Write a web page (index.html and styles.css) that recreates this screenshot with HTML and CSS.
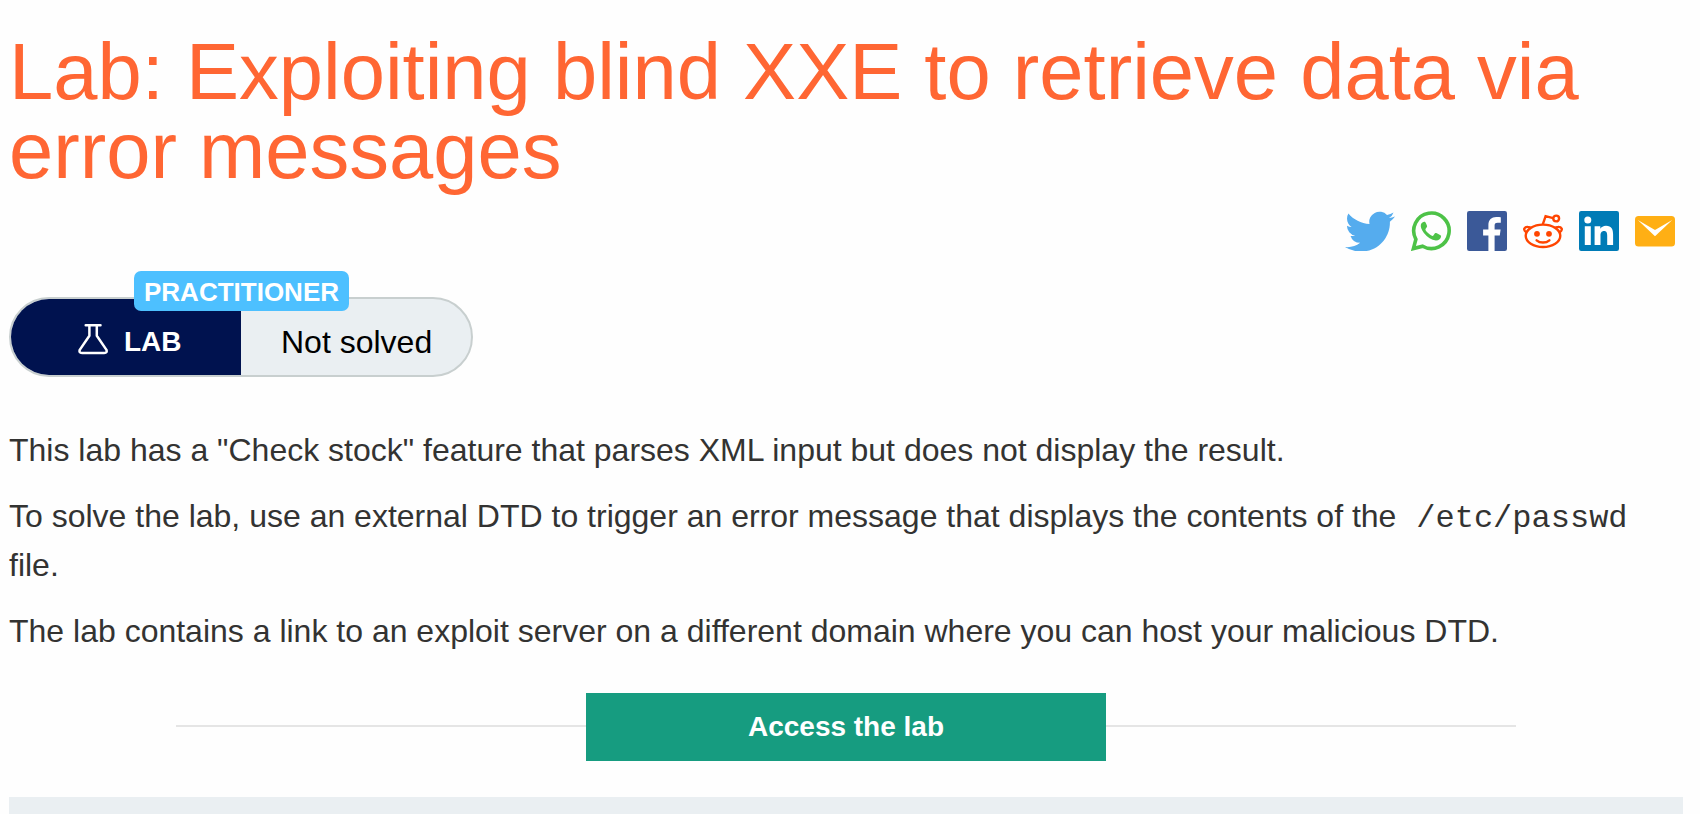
FILE: index.html
```html
<!DOCTYPE html>
<html lang="en">
<head>
<meta charset="utf-8">
<title>Lab: Exploiting blind XXE to retrieve data via error messages</title>
<link rel="stylesheet" href="styles.css">
</head>
<body>
<main class="page">
  <h1 class="title">Lab: Exploiting blind XXE to retrieve data via error messages</h1>
  <div class="share">
    <svg class="icon-wide" viewBox="0 1.9 24 19.6" preserveAspectRatio="none" fill="#55acee"><path d="M23.953 4.57a10 10 0 01-2.825.775 4.958 4.958 0 002.163-2.723c-.951.555-2.005.959-3.127 1.184a4.92 4.92 0 00-8.384 4.482C7.69 8.095 4.067 6.13 1.64 3.162a4.822 4.822 0 00-.666 2.475c0 1.71.87 3.213 2.188 4.096a4.904 4.904 0 01-2.228-.616v.06a4.923 4.923 0 003.946 4.827 4.996 4.996 0 01-2.212.085 4.936 4.936 0 004.604 3.417 9.867 9.867 0 01-6.102 2.105c-.39 0-.779-.023-1.17-.067a13.995 13.995 0 007.557 2.209c9.053 0 13.998-7.496 13.998-13.985 0-.21 0-.42-.015-.63A9.935 9.935 0 0024 4.59z"/></svg>
    <svg class="icon" viewBox="0 0 40 40"><path d="M2.400 37.600 4.900 28.300A17.700 17.700 0 1 1 11.700 35.200Z" fill="none" stroke="#4dc247" stroke-width="3.600"/><path d="M14.200 11.100c-.5-.8-3.400-.5-4.300 2.500-.6 2.200.5 5.100 3 8.400 3.500 4.500 7.700 7.200 12 7.400 3.100 0 5-1.600 5.200-4.500 0-.8-4.900-3.100-5.700-2.900-.8.2-1.900 2.800-2.700 2.900-1.200.1-6.900-4.300-7.300-6.500-.1-.9 1.800-2 1.700-3.100-.1-.8-1.400-3.700-1.900-4.200z" fill="#4dc247"/></svg>
    <svg class="icon" viewBox="0 0 40 40"><rect width="40" height="40" rx="2.200" fill="#3b5998"/><path d="M21.400 40V24.600h-5.300v-6h5.300v-4.500c0-5.200 3.200-8 7.800-8 2.200 0 4.100.2 4.600.2v5.400h-3.200c-2.500 0-3 1.200-3 2.900v4h6l-.8 6h-5.200V40z" fill="#fff"/></svg>
    <svg class="icon" viewBox="0 0 40 40" fill="none" stroke="#ff4500" stroke-width="2.400"><ellipse cx="20" cy="24.800" rx="17.300" ry="11.200"/><path d="M3.200 21.300C-.4 18.600 1.400 15.800 5 15.900c1.300 0 2.300.5 3 1.200M36.800 21.300c3.600-2.700 1.800-5.500-1.800-5.400-1.300 0-2.300.5-3 1.200M19.700 13.600 22.600 5.200l7.500 2"/><circle cx="33.200" cy="7.500" r="2.900"/><path d="M13.600 29.300c3.400 3 9.400 3 12.800 0" stroke-linecap="round"/><g fill="#ff4500" stroke="none"><circle cx="14" cy="22.800" r="2.900"/><circle cx="26" cy="22.800" r="2.900"/></g></svg>
    <svg class="icon" viewBox="0 0 40 40"><rect width="40" height="40" rx="2.200" fill="#007bb6"/><g fill="#fff"><circle cx="8.800" cy="9" r="3.500"/><path d="M5.800 15.200h6V34h-6zM15.600 15.200h5.700v2.600c1-1.800 3-3.100 5.700-3.100 5.700 0 7.100 3.800 7.100 8.900V34h-5.900v-9.200c0-2.700-.4-4.900-3.100-4.900-2.900 0-3.600 2.200-3.600 4.700V34h-5.900z"/></g></svg>
    <svg class="icon" viewBox="0 0 40 40"><rect y="5" width="40" height="30.600" rx="3.600" fill="#ffaf14"/><path d="M2.800 9 20 25.300 37.200 9 20 18.900Z" fill="#fff"/></svg>
  </div>
  <div class="status">
    <span class="level">PRACTITIONER</span>
    <div class="kind">
      <svg class="flask" viewBox="0 0 30 32" fill="none" stroke="#fff" stroke-width="2.500" stroke-linejoin="round" stroke-linecap="round"><path d="M7.700 2.200h14.800M11.400 2.500v10.200L1.900 26.600q-1.400 3.300 2.200 3.500h22q3.600-.2 2.200-3.500L18.800 12.700V2.500"/></svg>
      <span class="kind-label">LAB</span>
    </div>
    <div class="state">Not solved</div>
  </div>
  <div class="description">
    <p>This lab has a "Check stock" feature that parses XML input but does not display the result.</p>
    <p>To solve the lab, use an external DTD to trigger an error message that displays the contents of the <code>/etc/passwd</code> file.</p>
    <p>The lab contains a link to an exploit server on a different domain where you can host your malicious DTD.</p>
  </div>
  <div class="launch"><a class="button">Access the lab</a></div>
  <div class="panel"></div>
</main>
</body>
</html>
```
FILE: styles.css
```css
* { box-sizing: border-box; }
body {
  margin: 0;
  background: #fefefe;
  color: #333332;
  font-family: "Liberation Sans", Arial, sans-serif;
  font-size: 32px;
}
.page {
  height: 814px;
  padding: 32px 17px 0 9px;
  overflow: hidden;
}
.title {
  margin: 0;
  color: #ff6633;
  font-size: 79.55px;
  font-weight: 400;
  line-height: 79px;
}
.share {
  display: flex;
  justify-content: flex-end;
  gap: 16px;
  margin-top: 21px;
  padding-right: 8px;
}
.icon { width: 40px; height: 40px; }
.icon-wide { width: 50px; height: 40px; }
.status {
  position: relative;
  display: flex;
  width: 464px;
  height: 80px;
  margin-top: 46px;
  border: 2px solid #c8cfcf;
  border-radius: 40px;
  background: #eaeff2;
}
.level {
  position: absolute;
  top: -28px;
  left: 123px;
  width: 215px;
  height: 40px;
  border-radius: 7px;
  background: #4dc0ff;
  color: #fff;
  font-size: 26px;
  font-weight: 700;
  line-height: 43px;
  text-align: center;
}
.kind {
  display: flex;
  align-items: center;
  gap: 16px;
  width: 230px;
  padding-left: 67px;
  border-radius: 38px 0 0 38px;
  background: #00124f;
}
.flask { width: 30px; height: 32px; margin-top: 4px; }
.kind-label {
  padding-top: 10px;
  color: #fff;
  font-size: 28px;
  font-weight: 700;
}
.state {
  flex: 1;
  padding-left: 40px;
  color: #000;
  line-height: 86px;
}
.description { margin-top: 49px; line-height: 49px; }
.description p { margin: 0 0 17px; }
.description code {
  margin-left: 11px;
  font-family: "Liberation Mono", "Courier New", monospace;
  font-size: 32px;
  line-height: 1;
}
.launch {
  display: flex;
  align-items: center;
  margin: 37px 167px 0;
}
.launch::before, .launch::after {
  content: "";
  flex: 1;
  height: 2px;
  margin-bottom: 2px;
  background: #e5e5e5;
}
.button {
  width: 520px;
  height: 68px;
  background: #169c80;
  color: #fff;
  font-size: 28px;
  font-weight: 700;
  line-height: 68px;
  text-align: center;
}
.panel {
  height: 40px;
  margin-top: 36px;
  background: #eaeff2;
}
```
